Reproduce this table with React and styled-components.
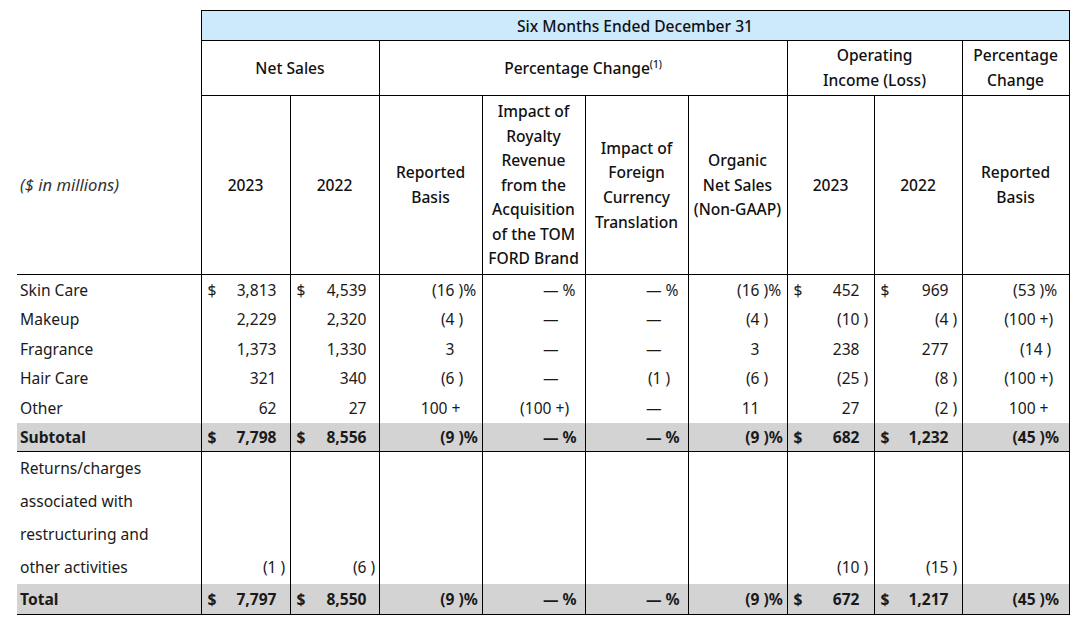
import React from 'react';
import styled, { createGlobalStyle } from 'styled-components';

const GlobalStyle = createGlobalStyle`
  html, body {
    margin: 0;
    padding: 0;
    background: #fff;
  }
  body {
    font-family: "Noto Sans", "Open Sans", sans-serif;
    color: #1a1a1a;
  }
`;

const Page = styled.div`
  padding: 10px 0 0 17px;
`;

const Table = styled.table`
  border-collapse: collapse;
  table-layout: fixed;
  width: 1052px;
  font-size: 15.6px;
`;

const Col = styled.col`
  width: ${({ $w }) => $w}px;
`;

const Row = styled.tr`
  height: ${({ $h }) => $h}px;
  background: ${({ $shade }) => ($shade ? '#d3d3d3' : 'transparent')};
  border-bottom: ${({ $rule }) => ($rule ? '1px solid #000' : 'none')};
`;

const HeadCell = styled.th`
  border: 1px solid #000;
  background: ${({ $blue }) => ($blue ? '#cdeafd' : '#fff')};
  color: #111;
  font-weight: 500;
  text-align: center;
  vertical-align: middle;
  line-height: ${({ $lh }) => $lh || 24.6}px;
  padding: 0 2px;
  white-space: nowrap;
`;

const Corner = styled.th`
  border: none;
  border-bottom: ${({ $rule }) => ($rule ? '1px solid #000' : 'none')};
  text-align: left;
  vertical-align: middle;
  font-weight: normal;
  font-style: italic;
  font-size: 16.6px;
  color: #333;
  padding: 0 0 0 3px;
`;

const Sup = styled.sup`
  font-size: 10px;
  line-height: 0;
  vertical-align: 6px;
`;

const LabelCell = styled.td`
  text-align: left;
  vertical-align: middle;
  padding: 0 0 0 3px;
  font-weight: ${({ $bold }) => ($bold ? 700 : 400)};
  line-height: ${({ $lh }) => $lh || 20}px;
  white-space: nowrap;
`;

const NumCell = styled.td`
  border-left: 1px solid #000;
  border-right: 1px solid #000;
  padding: 0 0 0 6px;
  vertical-align: ${({ $bottom }) => ($bottom ? 'bottom' : 'middle')};
  font-weight: ${({ $bold }) => ($bold ? 700 : 400)};
  line-height: ${({ $lh }) => $lh || 20}px;
`;

const NumWrap = styled.div`
  display: flex;
  align-items: baseline;
  white-space: pre;
`;

const Cur = styled.span`
  flex: none;
`;

const Val = styled.span`
  flex: 1;
  text-align: right;
`;

const Tail = styled.span`
  flex: none;
  width: ${({ $w }) => $w}px;
  text-align: left;
`;

const widths = [184, 89, 89, 103, 103, 103, 99, 87, 88, 107];
const tails = [13, 12, 27, 26, 26, 27, 14, 13, 33];

const pct = (v) => ({ v, s: ' )%' });
const neg = (v) => ({ v, s: ' )' });
const usd = (v) => ({ c: 1, v });
const dashPct = { v: '—', s: ' %' };

const rows = [
  {
    label: 'Skin Care',
    cells: [usd('3,813'), usd('4,539'), pct('(16'), dashPct, dashPct, pct('(16'), usd('452'), usd('969'), pct('(53')],
  },
  {
    label: 'Makeup',
    cells: ['2,229', '2,320', neg('(4'), '—', '—', neg('(4'), neg('(10'), neg('(4'), { v: '(100', s: ' +)' }],
  },
  {
    label: 'Fragrance',
    cells: ['1,373', '1,330', '3', '—', '—', '3', '238', '277', { v: '(14', s: ' )', t: 26 }],
  },
  {
    label: 'Hair Care',
    cells: ['321', '340', neg('(6'), '—', neg('(1'), neg('(6'), neg('(25'), neg('(8'), { v: '(100', s: ' +)' }],
  },
  {
    label: 'Other',
    cells: ['62', '27', { v: '100', s: ' +', t: 34 }, { v: '(100', s: ' +)', t: 33 }, '—', '11', '27', neg('(2'), { v: '100', s: ' +' }],
  },
];

const subtotal = [usd('7,798'), usd('8,556'), pct('(9'), dashPct, dashPct, pct('(9'), usd('682'), usd('1,232'), pct('(45')];
const returns = [neg('(1'), neg('(6'), '', '', '', '', neg('(10'), neg('(15'), ''];
const total = [usd('7,797'), usd('8,550'), pct('(9'), dashPct, dashPct, pct('(9'), usd('672'), usd('1,217'), pct('(45')];

function Num({ cell, tail }) {
  const c = typeof cell === 'string' ? { v: cell } : cell;
  return (
    <NumWrap>
      <Cur>{c.c ? '$' : ''}</Cur>
      <Val>{c.v}</Val>
      <Tail $w={c.t || tail}>{c.s || ''}</Tail>
    </NumWrap>
  );
}

function NumCells({ cells, bold, bottom, lh }) {
  return cells.map((cell, i) => (
    <NumCell key={i} $bold={bold} $bottom={bottom} $lh={lh}>
      <Num cell={cell} tail={tails[i]} />
    </NumCell>
  ));
}

export default function App() {
  return (
    <Page>
      <GlobalStyle />
      <Table>
        <colgroup>
          {widths.map((w, i) => (
            <Col key={i} $w={w} />
          ))}
        </colgroup>
        <thead>
          <Row $h={30}>
            <Corner />
            <HeadCell colSpan={9} $blue $lh={20}>
              Six Months Ended December 31
            </HeadCell>
          </Row>
          <Row $h={55}>
            <Corner />
            <HeadCell colSpan={2}>Net Sales</HeadCell>
            <HeadCell colSpan={4}>
              Percentage Change<Sup>(1)</Sup>
            </HeadCell>
            <HeadCell colSpan={2}>
              Operating
              <br />
              Income (Loss)
            </HeadCell>
            <HeadCell>
              Percentage
              <br />
              Change
            </HeadCell>
          </Row>
          <Row $h={179}>
            <Corner $rule>($ in millions)</Corner>
            <HeadCell>2023</HeadCell>
            <HeadCell>2022</HeadCell>
            <HeadCell>
              Reported
              <br />
              Basis
            </HeadCell>
            <HeadCell>
              Impact of
              <br />
              Royalty
              <br />
              Revenue
              <br />
              from the
              <br />
              Acquisition
              <br />
              of the TOM
              <br />
              FORD Brand
            </HeadCell>
            <HeadCell>
              Impact of
              <br />
              Foreign
              <br />
              Currency
              <br />
              Translation
            </HeadCell>
            <HeadCell>
              Organic
              <br />
              Net Sales
              <br />
              (Non-GAAP)
            </HeadCell>
            <HeadCell>2023</HeadCell>
            <HeadCell>2022</HeadCell>
            <HeadCell>
              Reported
              <br />
              Basis
            </HeadCell>
          </Row>
        </thead>
        <tbody>
          {rows.map((r, i) => (
            <Row key={r.label} $h={i % 2 === 0 ? 30 : 29}>
              <LabelCell>{r.label}</LabelCell>
              <NumCells cells={r.cells} />
            </Row>
          ))}
          <Row $h={29} $shade $rule>
            <LabelCell $bold>Subtotal</LabelCell>
            <NumCells cells={subtotal} bold />
          </Row>
          <Row $h={132}>
            <LabelCell $lh={33}>
              Returns/charges
              <br />
              associated with
              <br />
              restructuring and
              <br />
              other activities
            </LabelCell>
            <NumCells cells={returns} bottom lh={33} />
          </Row>
          <Row $h={30} $shade $rule>
            <LabelCell $bold>Total</LabelCell>
            <NumCells cells={total} bold />
          </Row>
        </tbody>
      </Table>
    </Page>
  );
}
